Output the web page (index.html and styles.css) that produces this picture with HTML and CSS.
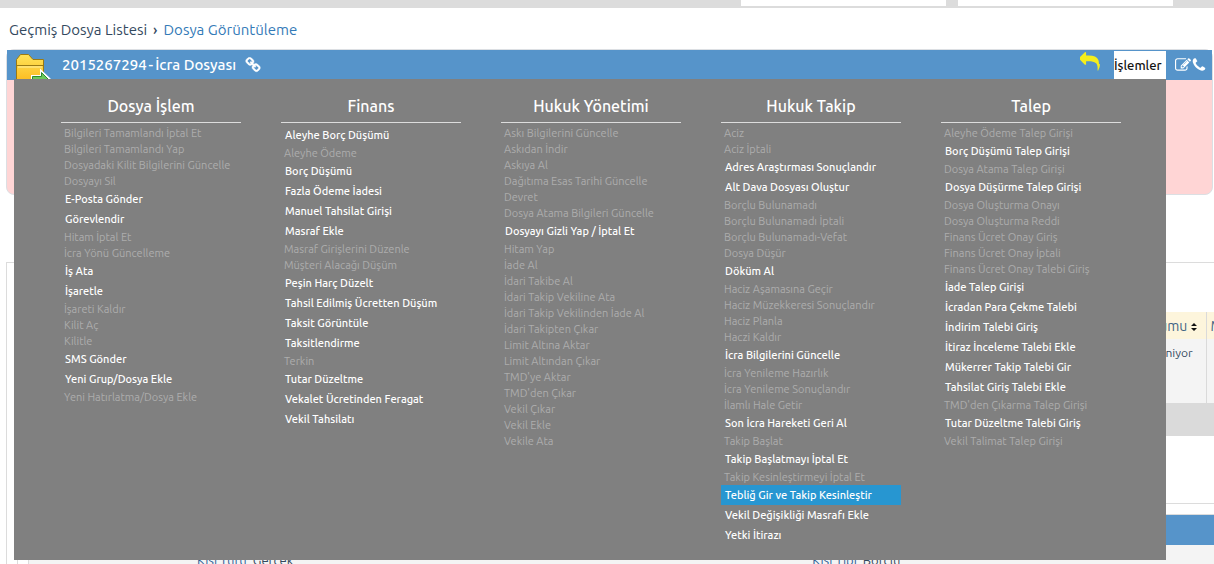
FILE: index.html
```html
<!DOCTYPE html>
<html lang="tr">
<head>
<meta charset="utf-8">
<title>Dosya Görüntüleme</title>
<link rel="stylesheet" href="styles.css">
</head>
<body>
<div class="topbar">
  <input class="topbar-field" type="text" aria-label="Dosya ara">
  <input class="topbar-field topbar-field-wide" type="text" aria-label="Kişi ara">
</div>

<nav class="breadcrumb" aria-label="Konum">
  <span>Geçmiş Dosya Listesi</span>
  <span class="breadcrumb-mark">›</span>
  <a href="#">Dosya Görüntüleme</a>
</nav>

<section class="case">
  <header class="case-header">
    <span class="folder">
      <svg width="36" height="30" viewBox="0 0 36 30" aria-hidden="true">
        <defs>
          <linearGradient id="gold" x1="0" y1="0" x2="0" y2="1">
            <stop offset="0" stop-color="#ffe45a"/>
            <stop offset="1" stop-color="#fbb81c"/>
          </linearGradient>
        </defs>
        <path d="M1.500 30V6.500L5.500 1.500h8L18 6.500h10.500V30z" fill="url(#gold)" stroke="#9a7a14"/>
        <path d="M2 12.500h26" stroke="#9a7a14"/>
        <path d="M3 14h24" stroke="#fff0a0"/>
        <path d="M17.500 32v-8.500h9V19l8.500 8v5z" fill="#8ed67c" stroke="#fff" stroke-width="3"/>
        <path d="M17.500 32v-8.500h9V19.500l7.500 7.500" fill="#6cc85c" stroke="#2f8a2c"/>
      </svg>
    </span>
    <h1 class="case-title"><span>2015267294</span><span>-</span><span>İcra Dosyası</span></h1>
    <a class="icon" href="#" aria-label="Bağlantı"><svg width="16" height="16" viewBox="0 0 1792 1792"><path fill="currentColor" stroke="currentColor" stroke-width="50" d="M1520 1216q0-40-28-68l-208-208q-28-28-68-28-42 0-72 32 3 3 19 18.500t21.500 21.500 15 19 13 25.500 3.500 27.500q0 40-28 68t-68 28q-15 0-27.500-3.500t-25.500-13-19-15-21.500-21.500-18.500-19q-33 31-33 73 0 40 28 68l206 207q27 27 68 27 40 0 68-26l147-146q28-28 28-67zm-703-705q0-40-28-68l-206-207q-28-28-68-28-39 0-68 27l-147 146q-28 28-28 67 0 40 28 68l208 208q27 27 68 27 42 0 72-31-3-3-19-18.500t-21.500-21.500-15-19-13-25.500-3.500-27.500q0-40 28-68t68-28q15 0 27.500 3.500t25.500 13 19 15 21.500 21.500 18.500 19q33-31 33-73zm895 705q0 120-85 203l-147 146q-83 83-203 83-121 0-204-85l-206-207q-83-83-83-203 0-123 88-209l-88-88q-86 88-208 88-120 0-204-84l-208-208q-84-84-84-204t85-203l147-146q83-83 203-83 121 0 204 85l206 207q83 83 83 203 0 123-88 209l88 88q86-88 208-88 120 0 204 84l208 208q84 84 84 204z"/></svg></a>
    <div class="case-tools">
      <a class="icon icon-back" href="#" aria-label="Geri"><svg width="20" height="20" viewBox="0 0 1792 1792"><path fill="currentColor" d="M1792 1120q0 166-127 451-3 7-10.500 24t-13.500 30-13 22q-12 17-28 17-15 0-23.500-10t-8.500-25q0-9 2.500-26.500t2.500-23.500q5-68 5-123 0-112-19.500-200.500t-54-153.500-89-112-117.500-79-150.500-47-177-24.500-200.500-7.500h-224v256q0 26-19 45t-45 19-45-19l-512-512q-19-19-19-45t19-45l512-512q19-19 45-19t45 19 19 45v256h224q713 0 875 403 53 134 53 333z"/></svg></a>
      <button class="menu-trigger" type="button" aria-expanded="true" aria-controls="menu">İşlemler</button>
      <a class="icon icon-edit" href="#" aria-label="Düzenle"><svg width="16" height="16" viewBox="0 0 1792 1792"><path fill="currentColor" d="M888 1184l116-116-152-152-116 116v56h96v96h56zm440-720q-16-16-33 1l-350 350q-17 17-1 33t33-1l350-350q17-17 1-33zm80 594v190q0 119-84.500 203.500t-203.500 84.500h-832q-119 0-203.500-84.500t-84.500-203.500v-832q0-119 84.500-203.500t203.500-84.500h832q63 0 117 25 15 7 18 23 3 17-9 29l-49 49q-14 14-32 8-23-6-45-6h-832q-66 0-113 47t-47 113v832q0 66 47 113t113 47h832q66 0 113-47t47-113v-126q0-13 9-22l64-64q15-15 35-7t20 29zm-96-738l288 288-672 672h-288v-288zm444 132l-92 92-288-288 92-92q28-28 68-28t68 28l152 152q28 28 28 68t-28 68z"/></svg></a>
      <a class="icon" href="#" aria-label="Telefon"><svg width="16" height="16" viewBox="0 0 1792 1792"><path fill="currentColor" d="M1600 1240q0 27-10 70.500t-21 68.500q-21 50-122 106-94 51-186 51-27 0-53-3.500t-57.500-12.500-47-14.500-55.500-20.500-49-18q-98-35-175-83-127-79-264-216t-216-264q-48-77-83-175-3-9-18-49t-20.500-55.500-14.500-47-12.500-57.500-3.500-53q0-92 51-186 56-101 106-122 25-11 68.500-21t70.500-10q14 0 21 3 18 6 53 76 11 19 30 54t35 63.500 31 53.500q3 4 17.500 25t21.500 35.500 7 28.500q0 20-28.500 50t-62 55-62 53-28.500 46q0 9 5 22.500t8.500 20.500 14 24 11.500 19q76 137 174 235t235 174q2 1 19 11.500t24 14 20.500 8.500 22.500 5q18 0 46-28.500t53-62 55-62 50-28.500q14 0 28.500 7t35.500 21.500 25 17.500q25 15 53.500 31t63.500 35 54 30q70 35 76 53 3 7 3 21z"/></svg></a>
    </div>

    <div class="menu" id="menu">
      <section class="menu-group">
        <h2>Dosya İşlem</h2>
        <button disabled>Bilgileri Tamamlandı İptal Et</button>
        <button disabled>Bilgileri Tamamlandı Yap</button>
        <button disabled>Dosyadaki Kilit Bilgilerini Güncelle</button>
        <button disabled>Dosyayı Sil</button>
        <button>E-Posta Gönder</button>
        <button>Görevlendir</button>
        <button disabled>Hitam İptal Et</button>
        <button disabled>İcra Yönü Güncelleme</button>
        <button>İş Ata</button>
        <button>İşaretle</button>
        <button disabled>İşareti Kaldır</button>
        <button disabled>Kilit Aç</button>
        <button disabled>Kilitle</button>
        <button>SMS Gönder</button>
        <button>Yeni Grup/Dosya Ekle</button>
        <button disabled>Yeni Hatırlatma/Dosya Ekle</button>
      </section>
      <section class="menu-group">
        <h2>Finans</h2>
        <button>Aleyhe Borç Düşümü</button>
        <button disabled>Aleyhe Ödeme</button>
        <button>Borç Düşümü</button>
        <button>Fazla Ödeme İadesi</button>
        <button>Manuel Tahsilat Girişi</button>
        <button>Masraf Ekle</button>
        <button disabled>Masraf Girişlerini Düzenle</button>
        <button disabled>Müşteri Alacağı Düşüm</button>
        <button>Peşin Harç Düzelt</button>
        <button>Tahsil Edilmiş Ücretten Düşüm</button>
        <button>Taksit Görüntüle</button>
        <button>Taksitlendirme</button>
        <button disabled>Terkin</button>
        <button>Tutar Düzeltme</button>
        <button>Vekalet Ücretinden Feragat</button>
        <button>Vekil Tahsilatı</button>
      </section>
      <section class="menu-group">
        <h2>Hukuk Yönetimi</h2>
        <button disabled>Askı Bilgilerini Güncelle</button>
        <button disabled>Askıdan İndir</button>
        <button disabled>Askıya Al</button>
        <button disabled>Dağıtıma Esas Tarihi Güncelle</button>
        <button disabled>Devret</button>
        <button disabled>Dosya Atama Bilgileri Güncelle</button>
        <button>Dosyayı Gizli Yap / İptal Et</button>
        <button disabled>Hitam Yap</button>
        <button disabled>İade Al</button>
        <button disabled>İdari Takibe Al</button>
        <button disabled>İdari Takip Vekiline Ata</button>
        <button disabled>İdari Takip Vekilinden İade Al</button>
        <button disabled>İdari Takipten Çıkar</button>
        <button disabled>Limit Altına Aktar</button>
        <button disabled>Limit Altından Çıkar</button>
        <button disabled>TMD'ye Aktar</button>
        <button disabled>TMD'den Çıkar</button>
        <button disabled>Vekil Çıkar</button>
        <button disabled>Vekil Ekle</button>
        <button disabled>Vekile Ata</button>
      </section>
      <section class="menu-group">
        <h2>Hukuk Takip</h2>
        <button disabled>Aciz</button>
        <button disabled>Aciz İptali</button>
        <button>Adres Araştırması Sonuçlandır</button>
        <button>Alt Dava Dosyası Oluştur</button>
        <button disabled>Borçlu Bulunamadı</button>
        <button disabled>Borçlu Bulunamadı İptali</button>
        <button disabled>Borçlu Bulunamadı-Vefat</button>
        <button disabled>Dosya Düşür</button>
        <button>Döküm Al</button>
        <button disabled>Haciz Aşamasına Geçir</button>
        <button disabled>Haciz Müzekkeresi Sonuçlandır</button>
        <button disabled>Haciz Planla</button>
        <button disabled>Haczi Kaldır</button>
        <button>İcra Bilgilerini Güncelle</button>
        <button disabled>İcra Yenileme Hazırlık</button>
        <button disabled>İcra Yenileme Sonuçlandır</button>
        <button disabled>İlamlı Hale Getir</button>
        <button>Son İcra Hareketi Geri Al</button>
        <button disabled>Takip Başlat</button>
        <button>Takip Başlatmayı İptal Et</button>
        <button disabled>Takip Kesinleştirmeyi İptal Et</button>
        <button class="active">Tebliğ Gir ve Takip Kesinleştir</button>
        <button>Vekil Değişikliği Masrafı Ekle</button>
        <button>Yetki İtirazı</button>
      </section>
      <section class="menu-group">
        <h2>Talep</h2>
        <button disabled>Aleyhe Ödeme Talep Girişi</button>
        <button>Borç Düşümü Talep Girişi</button>
        <button disabled>Dosya Atama Talep Girişi</button>
        <button>Dosya Düşürme Talep Girişi</button>
        <button disabled>Dosya Oluşturma Onayı</button>
        <button disabled>Dosya Oluşturma Reddi</button>
        <button disabled>Finans Ücret Onay Giriş</button>
        <button disabled>Finans Ücret Onay İptali</button>
        <button disabled>Finans Ücret Onay Talebi Giriş</button>
        <button>İade Talep Girişi</button>
        <button>İcradan Para Çekme Talebi</button>
        <button>İndirim Talebi Giriş</button>
        <button>İtiraz İnceleme Talebi Ekle</button>
        <button>Mükerrer Takip Talebi Gir</button>
        <button>Tahsilat Giriş Talebi Ekle</button>
        <button disabled>TMD'den Çıkarma Talep Girişi</button>
        <button>Tutar Düzeltme Talebi Giriş</button>
        <button disabled>Vekil Talimat Talep Girişi</button>
      </section>
    </div>
  </header>
  <div class="case-body"></div>
</section>

<main class="details">
  <section class="list">
    <table class="grid">
      <thead>
        <tr>
          <th>Durumu <svg class="sort" width="6" height="8" viewBox="0 0 6 8" aria-hidden="true"><path d="M3 0L6 3H0zM3 8L0 5h6z" fill="#111"/></svg></th>
          <th class="grid-next">M</th>
        </tr>
      </thead>
      <tbody>
        <tr><td>Bekleniyor</td><td class="grid-next"></td></tr>
      </tbody>
    </table>
    <div class="grid-footer"></div>
  </section>
  <section class="person">
    <div class="person-bar"></div>
    <dl class="person-body">
      <div><dt>Kişi Türü</dt><dd>Gerçek</dd></div>
      <div><dt>Kişi Tipi</dt><dd>Borçlu</dd></div>
    </dl>
  </section>
</main>
</body>
</html>
```
FILE: styles.css
```css
* { box-sizing: border-box; }

body {
  margin: 0;
  height: 100vh;
  overflow: hidden;
  background: #fff;
  color: #34495e;
  font-family: Ubuntu, "Noto Sans", "Open Sans", sans-serif;
  font-size: 15px;
}

button, input { font: inherit; }
a { color: #337ab7; text-decoration: none; }

.topbar {
  display: flex;
  justify-content: flex-end;
  gap: 12px;
  height: 8px;
  padding: 0 41px 2px 0;
  background: #dcdcdc;
}
.topbar-field {
  width: 205px;
  height: 6px;
  padding: 0;
  border: 0;
  background: #fff;
}
.topbar-field-wide { width: 215px; }

.breadcrumb {
  display: flex;
  gap: 6px;
  padding: 13px 9px 10px;
  line-height: 18px;
}
.breadcrumb-mark { font-weight: 500; }

.case {
  margin: 0 1px 0 6px;
  border: 1px solid #dcdfe3;
  border-radius: 8px;
  background: #ffd5d5;
}
.case-header {
  position: relative;
  display: flex;
  align-items: center;
  height: 30px;
  padding-right: 5px;
  background: #5694ca;
  color: #fff;
}
.case-body { height: 114px; }
.folder {
  align-self: flex-end;
  width: 55px;
  height: 27px;
  padding-left: 8px;
  overflow: hidden;
}
.case-title {
  display: flex;
  gap: 2px;
  margin: 0 9px 0 0;
  font-size: 15px;
  font-weight: 500;
  line-height: 20px;
}
.icon { display: flex; color: #fff; }
.icon-back { padding: 0 14px 6px 0; color: #f4ee1c; }
.icon-edit { padding-left: 9px; }
.case-tools {
  display: flex;
  align-items: center;
  margin-left: auto;
}
.menu-trigger {
  width: 52px;
  height: 28px;
  padding: 0;
  border: 0;
  background: #fff;
  color: #111;
  font-size: 13px;
  font-weight: 500;
  text-align: left;
}

.menu {
  position: absolute;
  z-index: 2;
  top: 29px;
  left: 7px;
  right: 46px;
  display: grid;
  grid-template-columns: repeat(5, 1fr);
  gap: 40px;
  padding: 16px 45px 15px 47px;
  background: #808080;
}
.menu-group { min-width: 0; }
.menu-group h2 {
  margin: 0 0 2px;
  padding-bottom: 5px;
  border-bottom: 1px solid #ddd;
  font-size: 16px;
  font-weight: 500;
  line-height: 22px;
  text-align: center;
}
.menu-group button {
  display: block;
  width: 100%;
  height: 20px;
  padding: 0 4px;
  border: 0;
  background: none;
  color: #fff;
  font-size: 11px;
  font-weight: 500;
  line-height: 20px;
  text-align: left;
  white-space: nowrap;
}
.menu-group button:disabled {
  height: 16px;
  padding: 0 3px;
  color: #adadad;
  font-weight: 400;
  line-height: 16px;
}
.menu-group .active { background: #2796d1; }

.details {
  margin: 67px 0 0 6px;
  padding: 0 0 60px 10px;
  border: 1px solid #dcdcdc;
  border-right: 0;
}
.list {
  padding-top: 49px;
  padding-bottom: 67px;
  border-bottom: 1px solid #dcdcdc;
}
.grid {
  width: 100%;
  border-collapse: collapse;
  font-size: 12px;
  text-align: right;
}
.grid th {
  height: 27px;
  padding: 0 9px;
  background: #fdf5dc;
  color: #3f6485;
  font-size: 14px;
  font-weight: 400;
}
.grid td {
  height: 64px;
  padding: 7px 13px;
  background: #f4f4f4;
  vertical-align: top;
}
.grid .grid-next {
  width: 8px;
  max-width: 8px;
  padding: 0 0 0 4px;
  border-left: 1px solid #dadada;
  overflow: hidden;
  text-align: left;
}
.grid-footer { height: 33px; background: #dadada; }

.person {
  margin-top: 10px;
  border: 1px solid #dcdcdc;
  border-right: 0;
}
.person-bar { height: 30px; background: #5694ca; }
.person-body {
  display: grid;
  grid-template-columns: 27fr 25fr;
  margin: 0 0 0 10px;
  padding: 6px 0 20px;
  border-left: 1px solid #dcdcdc;
  background: #f4f4f4;
  font-size: 13px;
  line-height: 18px;
}
.person-body div {
  display: flex;
  gap: 6px;
  padding-left: 168px;
}
.person-body dt { color: #2f6299; }
.person-body dd { margin: 0; }
```
